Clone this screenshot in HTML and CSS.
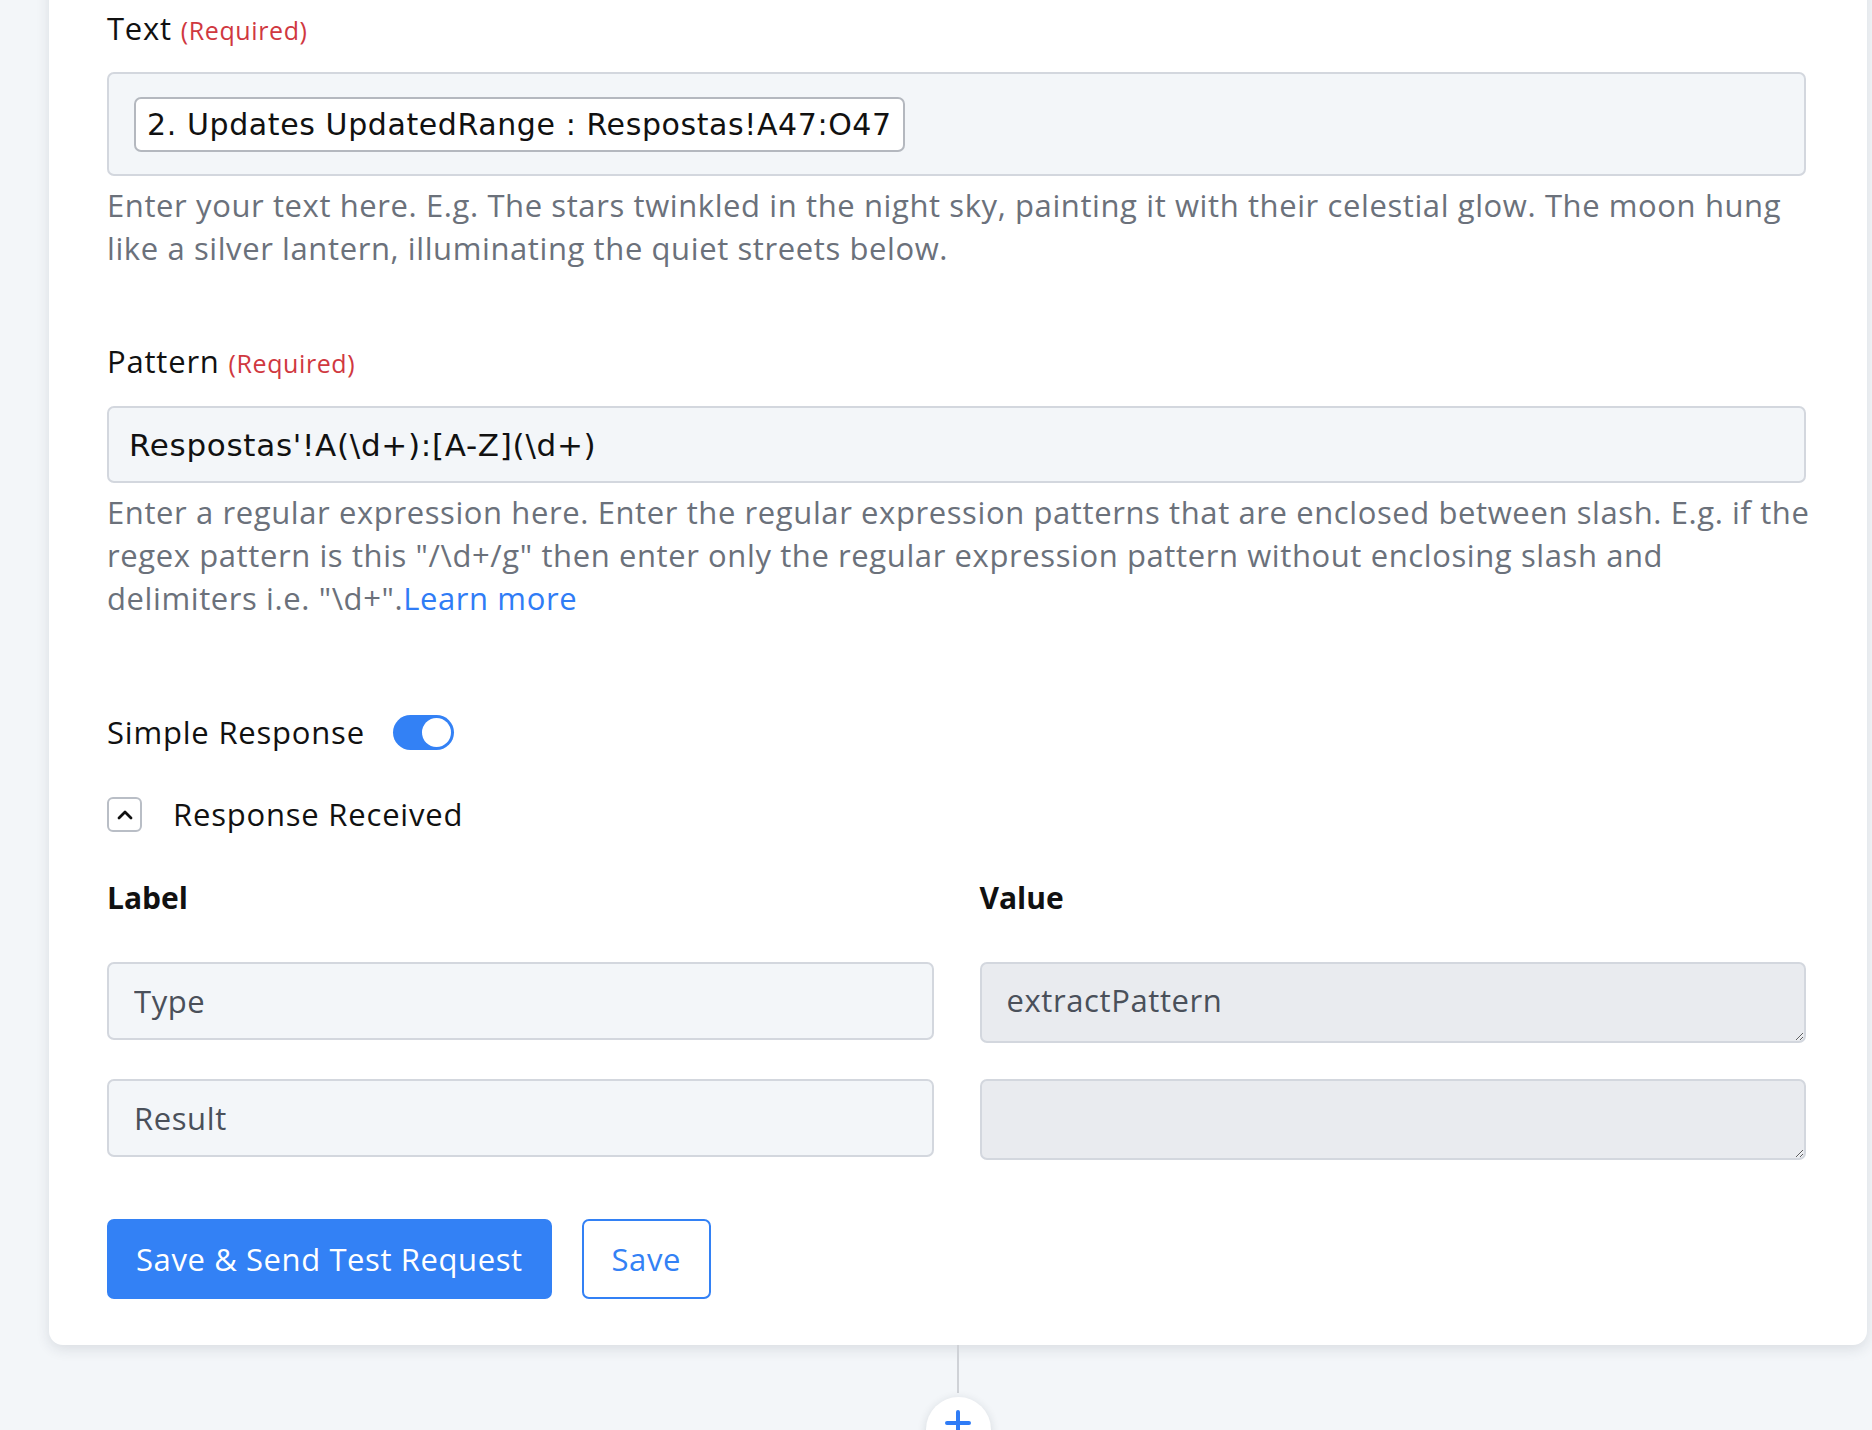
FILE: index.html
```html
<!DOCTYPE html>
<html lang="en">
<head>
    <meta charset="UTF-8">
    <meta name="viewport" content="width=device-width, initial-scale=1.0">
    <title>Extract Pattern</title>
    <link rel="stylesheet" href="styles.css">
</head>
<body>
    <div class="flow">
        <div class="step-card">
            <div class="field">
                <label class="field-label">Text <span class="req">(Required)</span></label>
                <div class="token-box">
                    <span class="token">2. Updates UpdatedRange : Respostas!A47:O47</span>
                </div>
                <p class="hint">Enter your text here. E.g. The stars twinkled in the night sky, painting it with their celestial glow. The moon hung like a silver lantern, illuminating the quiet streets below.</p>
            </div>

            <div class="field">
                <label class="field-label">Pattern <span class="req">(Required)</span></label>
                <input class="text-input pattern" type="text" value="Respostas'!A(\d+):[A-Z](\d+)">
                <p class="hint">Enter a regular expression here. Enter the regular expression patterns that are enclosed between slash. E.g. if the regex pattern is this "/\d+/g" then enter only the regular expression pattern without enclosing slash and delimiters i.e. "\d+".<a href="#">Learn more</a></p>
            </div>

            <div class="switch-row">
                <span>Simple Response</span>
                <span class="switch on"><span class="knob"></span></span>
            </div>

            <div class="collapse-row">
                <button class="collapse-btn" type="button">
                    <svg width="16" height="12" viewBox="0 0 16 12"><polyline points="2,10 8,4 14,10" fill="none" stroke="#111" stroke-width="2.8" stroke-linecap="round" stroke-linejoin="round"/></svg>
                </button>
                <span>Response Received</span>
            </div>

            <div class="response-grid">
                <div class="col-head">Label</div>
                <div class="col-head">Value</div>
                <input class="text-input" type="text" value="Type">
                <textarea class="value-box" disabled>extractPattern</textarea>
                <input class="text-input" type="text" value="Result">
                <textarea class="value-box" disabled></textarea>
            </div>

            <div class="actions">
                <button class="btn btn-primary" type="button">Save &amp; Send Test Request</button>
                <button class="btn btn-outline" type="button">Save</button>
            </div>
        </div>

        <div class="connector">
            <div class="connector-line"></div>
            <button class="add-step" type="button">
                <svg width="28" height="28" viewBox="0 0 28 28"><path d="M14 3v22M3 14h22" stroke="#2f7cf6" stroke-width="4" stroke-linecap="round"/></svg>
            </button>
        </div>
    </div>
</body>
</html>
```

FILE: styles.css
```css
*{box-sizing:border-box; padding:0; margin:0;}

html{
    font-family:"Open Sans", "Noto Sans", sans-serif;
    font-size:31px;
    letter-spacing:0.6px;
    color:#111;
}
body{
    background:#f3f6f9;
    overflow:hidden;
    height:1430px;
}

.flow{
    padding-left:49px;
    padding-right:5px;
}

/* card is scrolled, its top sits above the window */
.step-card{
    margin-top:-30px;
    padding:38px 61px 46px 58px;
    background:#fff;
    border-radius:14px;
    box-shadow:0 4px 14px rgba(30,40,60,.12);
}

.field-label{
    display:block;
    font-size:31px;
    letter-spacing:0.8px;
    line-height:40px;
    font-weight:500;
}
.req{
    color:#d0383f;
    font-size:25px;
    letter-spacing:0.6px;
    font-weight:400;
}

.token-box{
    margin-top:22px;
    height:104px;
    padding:23px 25px;
    background:#f3f6f9;
    border:2px solid #d3d7de;
    border-radius:7px;
}
.token{
    display:inline-block;
    height:55px;
    padding:0 11px;
    font-family:"DejaVu Sans", sans-serif;
    font-size:30px;
    letter-spacing:0.6px;
    line-height:51px;
    background:#fff;
    border:2px solid #b4b8bf;
    border-radius:7px;
}

.hint{
    margin-top:8px;
    margin-right:-6px;
    font-size:31px;
    line-height:43px;
    color:#6b717b;
}
.hint a{color:#2f7cf6; text-decoration:none;}

.field + .field{margin-top:71px;}

.text-input{
    display:block;
    width:100%;
    height:78px;
    padding:0 25px;
    font-family:"Open Sans", sans-serif;
    font-size:31px;
    letter-spacing:0.6px;
    color:#4a505a;
    background:#f3f6f9;
    border:2px solid #d3d7de;
    border-radius:7px;
    outline:none;
}
.field .text-input{margin-top:23px;}
.text-input.pattern{
    height:77px;
    padding:0 20px;
    font-family:"DejaVu Sans", sans-serif;
    font-size:31px;
    letter-spacing:0.7px;
    color:#111;
}

.switch-row{
    display:flex;
    align-items:center;
    gap:28px;
    margin-top:92px;
    font-size:31px;
    letter-spacing:0.8px;
    line-height:40px;
    font-weight:500;
}
.switch{
    width:61px;
    height:35px;
    padding:3px;
    border-radius:18px;
    background:#3381f5;
    display:flex;
    justify-content:flex-end;
}
.knob{
    width:29px;
    height:29px;
    border-radius:50%;
    background:#fff;
}

.collapse-row{
    display:flex;
    align-items:center;
    gap:31px;
    margin-top:42px;
    font-size:31px;
    letter-spacing:0.8px;
    line-height:40px;
    font-weight:500;
}
.collapse-btn{
    width:35px;
    height:35px;
    display:flex;
    align-items:center;
    justify-content:center;
    background:#fff;
    border:2px solid #b9bec6;
    border-radius:6px;
}

.response-grid{
    display:grid;
    grid-template-columns:1fr 1fr;
    column-gap:46px;
    row-gap:36px;
    margin-top:44px;
}
.col-head{
    font-size:30px;
    letter-spacing:0;
    line-height:40px;
    font-weight:700;
    margin-bottom:8px;
}
.value-box{
    display:block;
    width:100%;
    height:81px;
    padding:17px 25px;
    font-family:"Open Sans", sans-serif;
    font-size:31px;
    letter-spacing:0.6px;
    line-height:38px;
    color:#4a505a;
    background:#e9ebef;
    border:2px solid #d3d7de;
    border-radius:7px;
    resize:vertical;
}

.actions{
    display:flex;
    gap:30px;
    margin-top:59px;
}
.btn{
    height:80px;
    padding:0 27px;
    font-family:"Open Sans", sans-serif;
    font-size:31px;
    letter-spacing:0.6px;
    font-weight:500;
    border-radius:7px;
    cursor:pointer;
}
.btn-primary{
    color:#fff;
    background:#3381f5;
    border:2px solid #3381f5;
}
.btn-outline{
    width:129px;
    padding:0;
    color:#3381f5;
    background:#fff;
    border:2px solid #3381f5;
}

.connector{
    display:flex;
    flex-direction:column;
    align-items:center;
    width:1818px;
}
.connector-line{
    width:2px;
    height:48px;
    background:#cfd2d7;
}
.add-step{
    margin-top:4px;
    width:65px;
    height:65px;
    border-radius:50%;
    border:none;
    background:#fff;
    box-shadow:0 2px 10px rgba(30,40,60,.14);
    display:flex;
    justify-content:center;
    padding-top:12px;
}
```
